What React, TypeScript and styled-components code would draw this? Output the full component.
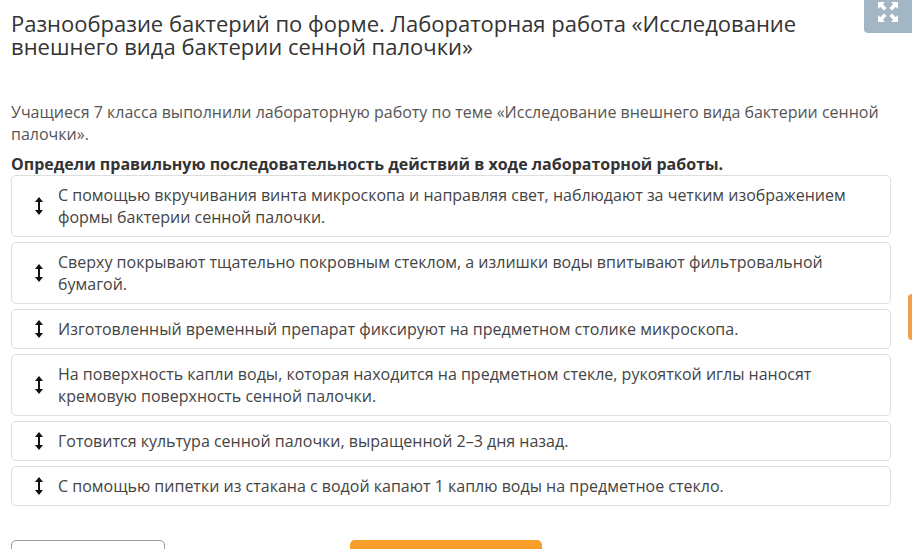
import React from 'react'
import styled, { createGlobalStyle } from 'styled-components'

const steps: string[] = [
  'С помощью вкручивания винта микроскопа и направляя свет, наблюдают за четким изображением формы бактерии сенной палочки.',
  'Сверху покрывают тщательно покровным стеклом, а излишки воды впитывают фильтровальной бумагой.',
  'Изготовленный временный препарат фиксируют на предметном столике микроскопа.',
  'На поверхность капли воды, которая находится на предметном стекле, рукояткой иглы наносят кремовую поверхность сенной палочки.',
  'Готовится культура сенной палочки, выращенной 2–3 дня назад.',
  'С помощью пипетки из стакана с водой капают 1 каплю воды на предметное стекло.',
]

/*---> Component <---*/
export default function App() {
  return (
    <>
      <GlobalStyle />
      <Page>
        <Title>
          Разнообразие бактерий по форме. Лабораторная работа «Исследование внешнего вида бактерии сенной палочки»
        </Title>
        <Intro>
          Учащиеся 7 класса выполнили лабораторную работу по теме «Исследование внешнего вида бактерии сенной палочки».
        </Intro>
        <Task>Определи правильную последовательность действий в ходе лабораторной работы.</Task>
        <StepList>
          {steps.map((text) => (
            <StepCard key={text}>
              <DragHandle>
                <svg width="8" height="18" viewBox="0 0 8 18">
                  <path d="M4 0 L8 5 L5 5 L5 13 L8 13 L4 18 L0 13 L3 13 L3 5 L0 5 Z" fill="#111" />
                </svg>
              </DragHandle>
              <StepText>{text}</StepText>
            </StepCard>
          ))}
        </StepList>
        <Actions>
          <GhostButton />
          <PrimaryButton />
        </Actions>
      </Page>
      <FullscreenButton>
        <svg width="22" height="22" viewBox="0 0 22 22" fill="#fff">
          <path d="M1 1 L8 1 L5.8 3.2 L9.5 6.9 L6.9 9.5 L3.2 5.8 L1 8 Z" />
          <path d="M21 1 L14 1 L16.2 3.2 L12.5 6.9 L15.1 9.5 L18.8 5.8 L21 8 Z" />
          <path d="M1 21 L8 21 L5.8 18.8 L9.5 15.1 L6.9 12.5 L3.2 16.2 L1 14 Z" />
          <path d="M21 21 L14 21 L16.2 18.8 L12.5 15.1 L15.1 12.5 L18.8 16.2 L21 14 Z" />
        </svg>
      </FullscreenButton>
      <SideTab />
    </>
  )
}

/*---> Styles <---*/

const GlobalStyle = createGlobalStyle`
  body {
    margin: 0;
    background: #fff;
    font-family: "Open Sans", "Noto Sans", sans-serif;
    color: #333;
    overflow: hidden;
  }
`

const Page = styled.div`
  width: 880px;
  padding: 12px 0 0 11px;
`

const Title = styled.h1`
  margin: 0;
  font-size: 22px;
  font-weight: 400;
  line-height: 23px;
  color: #333;
  padding-right: 90px;
`

const Intro = styled.p`
  margin: 43px 0 0;
  font-size: 16px;
  line-height: 22px;
  color: #555;
`

const Task = styled.p`
  margin: 8px 0 0;
  font-size: 16px;
  font-weight: 700;
  line-height: 22px;
  color: #333;
`

const StepList = styled.div`
  display: flex;
  flex-direction: column;
  gap: 5px;
  margin-top: 0;
`

const StepCard = styled.div`
  display: flex;
  align-items: center;
  border: 1px solid #dedede;
  border-radius: 5px;
  padding: 8px 12px 8px 23px;
  background: #fff;
`

const DragHandle = styled.div`
  width: 8px;
  height: 18px;
  margin-right: 15px;
  flex-shrink: 0;
  display: flex;
`

const StepText = styled.div`
  font-size: 16px;
  line-height: 22px;
  color: #444;
`

const Actions = styled.div`
  display: flex;
  margin-top: 34px;
  gap: 185px;
`

const GhostButton = styled.div`
  width: 152px;
  height: 40px;
  border: 1px solid #999;
  border-radius: 5px;
`

const PrimaryButton = styled.div`
  width: 192px;
  height: 40px;
  border-radius: 5px;
  background: #f89f2b;
`

const FullscreenButton = styled.div`
  position: fixed;
  top: 0;
  right: 0;
  width: 48px;
  height: 33px;
  background: #a3b6c4;
  border-bottom-left-radius: 4px;
  display: flex;
  justify-content: center;
  padding-top: 1px;
  box-sizing: border-box;
`

const SideTab = styled.div`
  position: fixed;
  top: 294px;
  right: 0;
  width: 4px;
  height: 46px;
  background: #f0a04b;
  border-radius: 4px 0 0 4px;
`
